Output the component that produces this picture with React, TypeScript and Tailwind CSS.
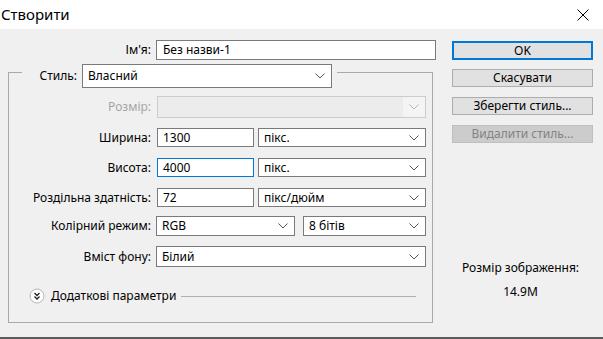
import React from "react";

const Chevron = ({ light = false }: { light?: boolean }) => (
  <svg width="10" height="6" viewBox="0 0 10 6" className="shrink-0">
    <polyline
      points="0.5,0.5 5,5 9.5,0.5"
      fill="none"
      stroke={light ? "#b4b4b4" : "#555555"}
      strokeWidth="1"
    />
  </svg>
);

const Select = ({ text, className }: { text: string; className: string }) => (
  <div
    className={
      "flex items-center justify-between bg-white border border-[#7a7a7a] pl-[5px] pr-[6px] " +
      className
    }
  >
    <span>{text}</span>
    <Chevron />
  </div>
);

const Label = ({ text, disabled = false }: { text: string; disabled?: boolean }) => (
  <div className={"w-[142px] text-right " + (disabled ? "text-[#a6a6a6]" : "text-black")}>{text}</div>
);

export default function App() {
  return (
    <div
      className="w-[603px] h-[339px] flex flex-col text-[12px] text-black"
      style={{ fontFamily: '"Noto Sans", "Liberation Sans", sans-serif' }}
    >
      <div className="h-[29px] bg-white flex items-center justify-between shrink-0">
        <span className="pl-[1px] text-[15px] leading-none">Створити</span>
        <svg width="12" height="12" viewBox="0 0 12 12" className="mr-[14px]">
          <line x1="0.5" y1="0.5" x2="11.5" y2="11.5" stroke="#000" strokeWidth="1" />
          <line x1="11.5" y1="0.5" x2="0.5" y2="11.5" stroke="#000" strokeWidth="1" />
        </svg>
      </div>
      <div className="flex-1 bg-[#f0f0f0] border-b-2 border-[#5c5c5c] flex pl-[8px]">
        {/* Left side */}
        <div className="w-[428px] flex flex-col pt-[11px]">
          <div className="flex items-center h-[20px]">
            <div className="w-[143px] text-right">Ім'я:</div>
            <div className="ml-[5px] w-[280px] h-[20px] bg-white border border-[#7a7a7a] flex items-center pl-[6px]">
              Без назви-1
            </div>
          </div>
          <div className="mt-[12px] w-[425px] h-[251px] border border-[#a9a9a9] flex flex-col">
            <div className="-mt-[9px] ml-[13px] w-fit bg-[#f0f0f0] flex items-center h-[24px] pr-[5px]">
              <div className="w-[55px] text-right">Стиль:</div>
              <Select text="Власний" className="ml-[5px] w-[250px] h-[24px]" />
            </div>
            <div className="mt-[8px] flex items-center h-[22px]">
              <Label text="Розмір:" disabled />
              <div className="ml-[6px] w-[269px] h-[22px] border border-[#cccccc] bg-[#ececec] flex">
                <div className="flex-1" />
                <div className="w-[22px] bg-[#f4f4f4] flex items-center justify-center">
                  <Chevron light />
                </div>
              </div>
            </div>
            <div className="mt-[10px] flex items-center h-[19px]">
              <Label text="Ширина:" />
              <div className="ml-[6px] w-[97px] h-[19px] bg-white border border-[#7a7a7a] flex items-center pl-[5px]">
                1300
              </div>
              <Select text="пікс." className="ml-[4px] w-[168px] h-[19px]" />
            </div>
            <div className="mt-[11px] flex items-center h-[19px]">
              <Label text="Висота:" />
              <div className="ml-[6px] w-[97px] h-[19px] bg-white border border-[#0078d7] flex items-center pl-[5px]">
                4000
              </div>
              <Select text="пікс." className="ml-[4px] w-[168px] h-[19px]" />
            </div>
            <div className="mt-[11px] flex items-center h-[19px]">
              <Label text="Роздільна здатність:" />
              <div className="ml-[6px] w-[97px] h-[19px] bg-white border border-[#7a7a7a] flex items-center pl-[5px]">
                72
              </div>
              <Select text="пікс/дюйм" className="ml-[4px] w-[168px] h-[19px]" />
            </div>
            <div className="mt-[9px] flex items-center h-[20px]">
              <Label text="Колірний режим:" />
              <Select text="RGB" className="ml-[5px] w-[139px] h-[20px]" />
              <Select text="8 бітів" className="ml-[8px] w-[123px] h-[20px]" />
            </div>
            <div className="mt-[10px] flex items-center h-[21px]">
              <Label text="Вміст фону:" />
              <Select text="Білий" className="ml-[5px] w-[270px] h-[21px]" />
            </div>
            <div className="mt-[21px] flex items-center h-[16px]">
              <svg width="16" height="16" viewBox="0 0 16 16" className="ml-[20px] shrink-0">
                <circle cx="8" cy="8" r="7" fill="#ffffff" stroke="#b5b5b5" strokeWidth="1" />
                <polyline points="5.5,5 8,7.5 10.5,5" fill="none" stroke="#222" strokeWidth="1.3" />
                <polyline points="5.5,8.5 8,11 10.5,8.5" fill="none" stroke="#222" strokeWidth="1.3" />
              </svg>
              <span className="ml-[6px]">Додаткові параметри</span>
              <div className="ml-[5px] h-px w-[235px] bg-[#b0b0b0]" />
            </div>
          </div>
        </div>
        {/* Right side */}
        <div className="ml-[16px] w-[141px] flex flex-col pt-[12px]">
          <div className="h-[19px] border-2 border-[#0078d7] bg-[#e1e1e1] flex items-center justify-center">
            OK
          </div>
          <div className="mt-[9px] h-[18px] border border-[#adadad] bg-[#e1e1e1] flex items-center justify-center">
            Скасувати
          </div>
          <div className="mt-[10px] h-[18px] border border-[#adadad] bg-[#e1e1e1] flex items-center justify-center">
            Зберегти стиль...
          </div>
          <div className="mt-[10px] h-[18px] border border-[#bfbfbf] bg-[#cccccc] text-[#838383] flex items-center justify-center">
            Видалити стиль...
          </div>
          <div className="mt-[117px] h-[16px] leading-[16px] text-center pr-[4px]">Розмір зображення:</div>
          <div className="mt-[8px] h-[16px] leading-[16px] text-center pr-[4px]">14.9M</div>
        </div>
      </div>
    </div>
  );
}
